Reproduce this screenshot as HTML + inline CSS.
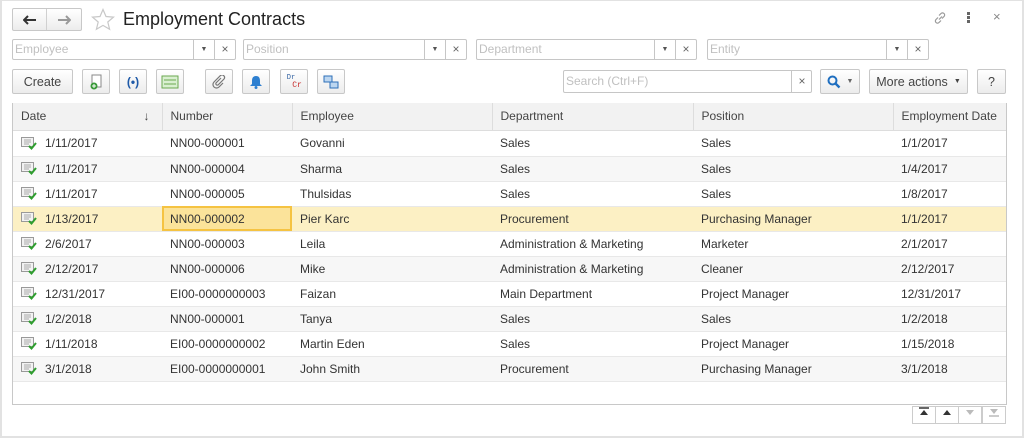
<!DOCTYPE html>
<html><head><meta charset="utf-8"><style>
*{box-sizing:border-box;margin:0;padding:0}
body{width:1024px;height:438px;background:#fff;font-family:"Liberation Sans",Arial,sans-serif;font-size:12px;color:#333;position:relative;overflow:hidden}
.frame{position:absolute;left:0;top:0;width:1024px;height:438px;border:2px solid #e2e2e2;border-top-width:1px}
.abs{position:absolute}
.btn{position:absolute;height:25px;border:1px solid #c8c8c8;border-radius:2px;background:linear-gradient(#fff,#ececec);display:flex;align-items:center;justify-content:center;font-size:12.5px;color:#444}
.fld{position:absolute;height:21px;border:1px solid #c6c6c6;border-radius:2px;background:#fff;color:#c0c0c0;font-size:12px;line-height:19px;padding-left:2px}
.fld .dd{position:absolute;top:0;height:19px;width:21px;border-left:1px solid #c6c6c6;text-align:center;color:#555;font-size:7px;line-height:19px}
.fld .x{position:absolute;top:0;height:19px;width:21px;border-left:1px solid #c6c6c6;text-align:center;color:#666;font-size:12px;line-height:18px}
table{position:absolute;left:13px;top:103px;width:993px;border-collapse:collapse;font-size:12px}
th{height:27px;background:#f2f2f2;font-weight:normal;text-align:left;padding-left:8px;border-right:1px solid #ddd;border-bottom:1px solid #ddd;color:#444}
td{height:25px;padding-left:8px;border-bottom:1px solid #e8e8e8;color:#333;white-space:nowrap}
tr.alt td{background:#f7f7f7}
tr.sel td{background:#fcf0c4}
td.cur{background:#fbe39a!important;outline:2px solid #f5c342;outline-offset:-2px}
.ic{display:inline-block;vertical-align:middle;margin-right:8px;margin-top:-2px}
.box{position:absolute;left:12px;top:103px;width:995px;height:302px;border:1px solid #c8c8c8}
.nav{position:absolute;top:406px;height:18px;width:24px;border:1px solid #ccc;background:#fff;text-align:center;font-size:8px;line-height:16px}
</style></head><body>
<div class="frame"></div>
<div class="btn" style="left:12px;top:8px;width:70px;height:23px;justify-content:flex-start">
<span style="width:34px;height:21px;border-right:1px solid #d0d0d0;display:flex;align-items:center;justify-content:center"><svg width="14" height="10"><path d="M1 5h12M5 1L1 5l4 4" fill="none" stroke="#333" stroke-width="2"/></svg></span><span style="width:34px;display:flex;align-items:center;justify-content:center"><svg width="14" height="10"><path d="M1 5h12M9 1l4 4-4 4" fill="none" stroke="#999" stroke-width="2"/></svg></span></div>
<svg class="abs" style="left:91px;top:8px" width="24" height="23" viewBox="0 0 24 23"><path d="M12 1.5l3 7 7.5.6-5.7 4.9 1.8 7.3L12 17.4 5.4 21.3l1.8-7.3L1.5 9.1 9 8.5z" fill="none" stroke="#c8c8c8" stroke-width="1.2"/></svg>
<div class="abs" style="left:123px;top:9px;font-size:18px;color:#222">Employment Contracts</div>
<svg class="abs" style="left:932px;top:10px" width="16" height="16" viewBox="0 0 16 16"><g fill="none" stroke="#999" stroke-width="1.2"><path d="M7 9.5l3-3"/><path d="M6 7.5l-2 2a2 2 0 003 3l2-2"/><path d="M10 8.5l2-2a2 2 0 00-3-3l-2 2"/></g></svg>
<div class="abs" style="left:967px;top:12px;width:3px;height:11px;background:repeating-linear-gradient(#666 0 3px,transparent 3px 4px)"></div>
<div class="abs" style="left:993px;top:9px;color:#888;font-size:13px">×</div>

<div class="fld" style="left:12px;top:39px;width:224px">Employee<span class="dd" style="left:180px">▼</span><span class="x" style="left:201px">×</span></div>
<div class="fld" style="left:243px;top:39px;width:224px">Position<span class="dd" style="left:180px">▼</span><span class="x" style="left:201px">×</span></div>
<div class="fld" style="left:476px;top:39px;width:221px">Department<span class="dd" style="left:177px">▼</span><span class="x" style="left:198px">×</span></div>
<div class="fld" style="left:707px;top:39px;width:222px">Entity<span class="dd" style="left:178px">▼</span><span class="x" style="left:199px">×</span></div>

<div class="btn" style="left:12px;top:69px;width:61px">Create</div>
<div class="btn" style="left:82px;top:69px;width:28px"><svg width="16" height="16"><rect x="4" y="1" width="9" height="12" fill="#fff" stroke="#888"/><circle cx="6" cy="12" r="3.5" fill="#3a9a3a"/><path d="M6 10v4M4 12h4" stroke="#fff"/></svg></div>
<div class="btn" style="left:119px;top:69px;width:28px;color:#1f5aa8;font-weight:bold;font-size:12px">(•)</div>
<div class="btn" style="left:156px;top:69px;width:28px"><svg width="18" height="14"><rect x="1" y="1" width="16" height="12" fill="#d9efd0" stroke="#6aa84f"/><path d="M3 5h12M3 9h12" stroke="#6aa84f"/></svg></div>
<div class="btn" style="left:205px;top:69px;width:28px"><svg width="14" height="14"><path d="M9 3L4 8a1.5 1.5 0 002 2l6-6a2.5 2.5 0 00-3.5-3.5L2 7a3.5 3.5 0 005 5l4-4" fill="none" stroke="#777" stroke-width="1.2"/></svg></div>
<div class="btn" style="left:242px;top:69px;width:28px"><svg width="14" height="14"><path d="M7 1c3 0 4 2 4 5v3l2 2H1l2-2V6c0-3 1-5 4-5z" fill="#2d7fd0"/><circle cx="7" cy="12.5" r="1.5" fill="#2d7fd0"/></svg></div>
<div class="btn" style="left:280px;top:69px;width:28px;flex-direction:column;font-size:7px;font-family:'Liberation Mono',monospace;line-height:8px"><span style="color:#2d5fa0;margin-left:-6px">Dr</span><span style="color:#c62828;margin-left:6px;font-size:8px">Cr</span></div>
<div class="btn" style="left:317px;top:69px;width:28px"><svg width="16" height="16"><rect x="1" y="2" width="8" height="6" fill="#bcd6f0" stroke="#2d6fb8"/><rect x="7" y="8" width="8" height="6" fill="#bcd6f0" stroke="#2d6fb8"/></svg></div>

<div class="fld" style="left:563px;top:70px;width:249px;height:23px;line-height:21px">Search (Ctrl+F)<span class="x" style="left:227px;height:21px;line-height:20px">×</span></div>
<div class="btn" style="left:820px;top:69px;width:40px"><svg width="14" height="14"><circle cx="5.5" cy="5.5" r="4" fill="none" stroke="#1f6fc0" stroke-width="2"/><path d="M8.5 8.5l4 4" stroke="#1f6fc0" stroke-width="2.4"/></svg><span style="color:#666;font-size:7px;margin-left:6px">▼</span></div>
<div class="btn" style="left:869px;top:69px;width:99px">More actions <span style="font-size:7px;margin-left:6px">▼</span></div>
<div class="btn" style="left:977px;top:69px;width:29px">?</div>

<div class="box"></div>
<table>
<colgroup><col style="width:149px"><col style="width:130px"><col style="width:200px"><col style="width:201px"><col style="width:200px"><col></colgroup>
<tr><th>Date<span style="float:right;margin-right:12px">↓</span></th><th>Number</th><th>Employee</th><th>Department</th><th>Position</th><th style="border-right:none">Employment Date</th></tr>
</table>
<table style="top:131px" id="t">
<colgroup><col style="width:149px"><col style="width:130px"><col style="width:200px"><col style="width:201px"><col style="width:200px"><col></colgroup>
<tbody></tbody></table>
<script>
var d=[["1/11/2017","NN00-000001","Govanni","Sales","Sales","1/1/2017"],["1/11/2017","NN00-000004","Sharma","Sales","Sales","1/4/2017"],["1/11/2017","NN00-000005","Thulsidas","Sales","Sales","1/8/2017"],["1/13/2017","NN00-000002","Pier Karc","Procurement","Purchasing Manager","1/1/2017"],["2/6/2017","NN00-000003","Leila","Administration &amp; Marketing","Marketer","2/1/2017"],["2/12/2017","NN00-000006","Mike","Administration &amp; Marketing","Cleaner","2/12/2017"],["12/31/2017","EI00-0000000003","Faizan","Main Department","Project Manager","12/31/2017"],["1/2/2018","NN00-000001","Tanya","Sales","Sales","1/2/2018"],["1/11/2018","EI00-0000000002","Martin Eden","Sales","Project Manager","1/15/2018"],["3/1/2018","EI00-0000000001","John Smith","Procurement","Purchasing Manager","3/1/2018"]];
var ic='<svg class="ic" width="16" height="14"><rect x="0.5" y="1.5" width="12" height="9" fill="#f2f2f2" stroke="#999"/><path d="M3 4h7M3 6h7M3 8h5" stroke="#aaa"/><path d="M8 10l2.5 2.5L15 7" fill="none" stroke="#2e9e2e" stroke-width="2"/></svg>';
var h='';d.forEach(function(r,i){var c=i==3?'sel':(i%2==1?'alt':'');h+='<tr class="'+c+'"><td>'+ic+r[0]+'</td><td'+(i==3?' class="cur"':'')+'>'+r[1]+'</td><td>'+r[2]+'</td><td>'+r[3]+'</td><td>'+r[4]+'</td><td>'+r[5]+'</td></tr>';});
document.querySelector('#t tbody').innerHTML=h;
</script>
<div class="nav" style="left:912px"><svg width="12" height="10"><path d="M1 1h10" stroke="#333" stroke-width="1.5"/><path d="M2 8h8L6 3z" fill="#333"/></svg></div>
<div class="nav" style="left:935px"><svg width="12" height="10"><path d="M2 8h8L6 3z" fill="#333"/></svg></div>
<div class="nav" style="left:958px"><svg width="12" height="10"><path d="M2 3h8L6 8z" fill="#bbb"/></svg></div>
<div class="nav" style="left:982px"><svg width="12" height="10"><path d="M2 2h8L6 7z" fill="#bbb"/><path d="M1 9h10" stroke="#bbb" stroke-width="1.5"/></svg></div>
</body></html>
